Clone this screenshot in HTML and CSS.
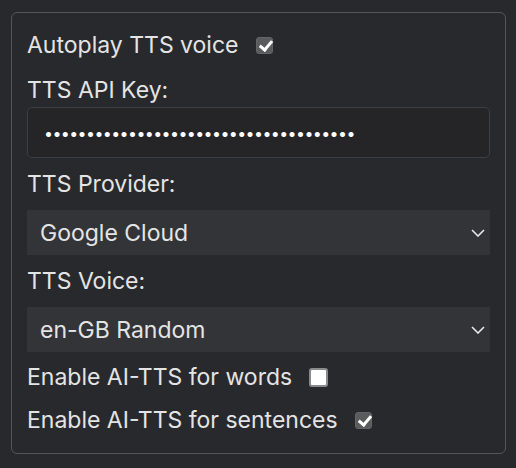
FILE: index.html
```html
<!DOCTYPE html>
<html lang="en">
<head>
<meta charset="utf-8">
<title>TTS settings</title>
<link rel="stylesheet" href="styles.css">
</head>
<body>
<fieldset class="panel">
  <label class="check-row first">
    <span>Autoplay TTS voice</span>
    <input type="checkbox" class="check" checked>
  </label>
  <label class="field-label gap-big">TTS API Key:</label>
  <input type="password" class="text-input" value="abcdefghijklmnopqrstuvwxyz0123456789a">
  <label class="field-label">TTS Provider:</label>
  <div class="select-wrap">
    <select class="select"><option>Google Cloud</option></select>
    <svg class="chevron" width="14" height="8" viewBox="0 0 14 8"><polyline points="1,1 7,7 13,1" fill="none" stroke="#e8e8e8" stroke-width="1.6"/></svg>
  </div>
  <label class="field-label">TTS Voice:</label>
  <div class="select-wrap">
    <select class="select"><option>en-GB Random</option></select>
    <svg class="chevron" width="14" height="8" viewBox="0 0 14 8"><polyline points="1,1 7,7 13,1" fill="none" stroke="#e8e8e8" stroke-width="1.6"/></svg>
  </div>
  <label class="check-row after-select">
    <span>Enable AI-TTS for words</span>
    <input type="checkbox" class="check">
  </label>
  <label class="check-row last">
    <span>Enable AI-TTS for sentences</span>
    <input type="checkbox" class="check" checked>
  </label>
</fieldset>
</body>
</html>
```
FILE: styles.css
```css
html, body {
  margin: 0;
  padding: 0;
  background: #28292c;
}
body {
  font-family: Inter, "Noto Sans", sans-serif;
  font-size: 23px;
  color: #e4e4e4;
  padding: 12px 0 0 11px;
}
.panel {
  box-sizing: border-box;
  width: 495px;
  height: 442px;
  margin: 0;
  border: 1px solid #55565a;
  border-radius: 6px;
  padding: 20px 15px 21px 15px;
  display: flex;
  flex-direction: column;
  min-width: 0;
}
.check-row {
  display: flex;
  align-items: center;
  height: 24px;
  line-height: 24px;
}
.check-row.after-select { margin-top: 13px; }
.check-row.last { margin-top: 19px; }
.field-label {
  display: block;
  height: 24px;
  line-height: 24px;
  margin-top: 14px;
  margin-bottom: 14px;
}
.field-label.gap-big {
  margin-top: 21px;
  margin-bottom: 5px;
}
.check {
  appearance: none;
  -webkit-appearance: none;
  box-sizing: border-box;
  width: 17px;
  height: 17px;
  margin: 0 0 0 17px;
  border-radius: 3px;
  background: #5a5b5d;
  border: 1px solid #646568;
  position: relative;
  flex: none;
}
.check:checked::after {
  content: "";
  position: absolute;
  left: 5px;
  top: 0px;
  width: 5px;
  height: 10px;
  border: solid #ffffff;
  border-width: 0 3px 3px 0;
  transform: rotate(40deg);
}
.check:not(:checked) {
  background: #ffffff;
  border: 2px solid #8a8b8e;
  width: 19px;
  height: 19px;
}
.text-input {
  box-sizing: border-box;
  width: 463px;
  height: 51px;
  margin: 0;
  background: #252528;
  border: 1px solid #3d3e41;
  border-radius: 5px;
  padding: 0 16px;
  color: #ffffff;
  font-family: Inter, sans-serif;
  font-size: 16px;
  letter-spacing: -0.6px;
  outline: none;
}
.select-wrap {
  position: relative;
  width: 463px;
  height: 45px;
}
.select {
  appearance: none;
  -webkit-appearance: none;
  box-sizing: border-box;
  width: 100%;
  height: 100%;
  margin: 0;
  background: #333437;
  border: none;
  border-radius: 0;
  padding: 0 13px;
  color: #e4e4e4;
  font-family: Inter, sans-serif;
  font-size: 23px;
  outline: none;
}
.chevron {
  position: absolute;
  right: 5px;
  top: 19px;
}
```
